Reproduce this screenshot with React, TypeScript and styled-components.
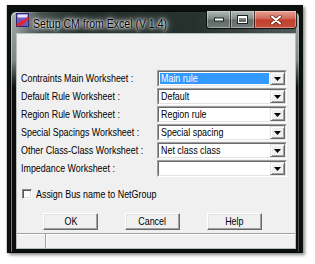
import React from 'react';
import styled, { createGlobalStyle } from 'styled-components';

const UI_FONT = "'Liberation Sans', Arial, sans-serif";

const GlobalStyle = createGlobalStyle`
  html, body {
    margin: 0;
    padding: 0;
    background: #ffffff;
  }
  body {
    width: 315px;
    height: 264px;
    overflow: hidden;
    font-family: ${UI_FONT};
  }
`;

/* the screenshot's text is horizontally condensed (Arial Narrow-like) */
const Narrow = styled.span<{ $origin?: string }>`
  display: inline-block;
  white-space: nowrap;
  transform: scaleX(0.81);
  transform-origin: ${(p) => p.$origin ?? 'left'} center;
`;

const Desktop = styled.div`
  box-sizing: border-box;
  margin: 5px 0 0 7px;
  width: 296px;
  height: 248px;
  padding: 6px 0 0 3px;
  background: #0c1110;
  box-shadow: 2px 2px 3px rgba(0, 0, 0, 0.45), -1px 0 1px rgba(0, 0, 0, 0.15);
`;

const Window = styled.div`
  box-sizing: border-box;
  width: 290px;
  height: 242px;
  display: flex;
  flex-direction: column;
  padding: 0 3px 3px 5px;
  border: 1px solid #070909;
  border-radius: 6px 6px 0 0;
  background:
    linear-gradient(180deg, rgba(8, 10, 10, 0) 0px, rgba(8, 10, 10, 0) 48px, rgba(8, 10, 10, 0.96) 76px),
    linear-gradient(180deg, #a3abaa 0px, #8c9593 30px, #6f7977 70px);
  box-shadow: inset 1px 1px 0 rgba(255, 255, 255, 0.45), inset -1px 0 0 rgba(255, 255, 255, 0.25);
`;

const TitleBar = styled.div`
  height: 21px;
  display: flex;
  align-items: flex-start;
  flex-shrink: 0;
  background: linear-gradient(90deg, rgba(30, 40, 37, 0) 0px, rgba(28, 38, 35, 0.7) 24px, rgba(22, 33, 29, 0.92) 60px, rgba(26, 36, 33, 0.9) 180px, rgba(50, 60, 58, 0.7) 100%);
`;

const AppIcon = styled.svg`
  margin-top: 1px;
  flex-shrink: 0;
`;

const Title = styled.div`
  margin: 4px 0 0 3px;
  width: 140px;
  font-size: 13px;
  line-height: 15px;
  color: #000;
  white-space: nowrap;
  text-shadow:
    0 0 2px #fff,
    0 0 4px rgba(255, 255, 255, 0.95),
    0 0 7px rgba(255, 255, 255, 0.85),
    0 0 11px rgba(255, 255, 255, 0.65);
`;

const CaptionGroup = styled.div`
  margin: -1px -1px 0 auto;
  display: flex;
  height: 17px;
  border: 1px solid rgba(0, 0, 0, 0.75);
  border-top: none;
  border-radius: 0 0 4px 4px;
  overflow: hidden;
`;

const CaptionButton = styled.div<{ $w: number; $close?: boolean }>`
  box-sizing: border-box;
  width: ${(p) => p.$w}px;
  height: 100%;
  display: flex;
  align-items: center;
  justify-content: center;
  background: ${(p) =>
    p.$close
      ? 'linear-gradient(180deg, #e8a093 0%, #d2705f 40%, #c0402c 55%, #c8503a 100%)'
      : 'linear-gradient(180deg, rgba(220,228,226,0.75) 0%, rgba(160,170,168,0.7) 45%, rgba(110,122,120,0.75) 55%, rgba(140,150,148,0.7) 100%)'};
  box-shadow: inset 0 0 0 1px rgba(255, 255, 255, 0.35);
  & + & {
    border-left: 1px solid rgba(0, 0, 0, 0.6);
  }
`;

const Client = styled.div`
  flex: 1;
  display: flex;
  flex-direction: column;
  background: #f0f0f0;
  border: 1px solid #b8c0be;
  font-size: 11px;
  color: #000;
`;

const FormGrid = styled.div`
  margin: 36px 0 0 4px;
  display: grid;
  grid-template-columns: 136px 130px;
  grid-auto-rows: 17px;
  row-gap: 1px;
  align-items: center;
`;

const Label = styled.div`
  line-height: 13px;
  white-space: nowrap;
`;

const Combo = styled.div`
  box-sizing: border-box;
  height: 17px;
  border: 1px solid;
  border-color: #a0a0a0 #ffffff #ffffff #a0a0a0;
  background: #fff;
`;

const ComboInner = styled.div`
  box-sizing: border-box;
  height: 100%;
  display: flex;
  border: 1px solid;
  border-color: #696969 #e3e3e3 #e3e3e3 #696969;
`;

const ComboValue = styled.div<{ $selected?: boolean }>`
  flex: 1;
  margin: 1px;
  padding-left: 1px;
  line-height: 11px;
  white-space: nowrap;
  overflow: hidden;
  background: ${(p) => (p.$selected ? '#3399ff' : 'transparent')};
  color: ${(p) => (p.$selected ? '#ffffff' : '#000000')};
`;

const ArrowButton = styled.div`
  box-sizing: border-box;
  width: 15px;
  display: flex;
  align-items: center;
  justify-content: center;
  background: #f0f0f0;
  border: 1px solid;
  border-color: #e3e3e3 #696969 #696969 #e3e3e3;
  box-shadow: inset 1px 1px 0 #ffffff, inset -1px -1px 0 #a0a0a0;
`;

const CheckRow = styled.label`
  margin: 12px 0 0 5px;
  display: flex;
  align-items: center;
  gap: 4px;
  height: 10px;
  line-height: 13px;
  white-space: nowrap;
`;

const CheckBox = styled.span`
  box-sizing: border-box;
  flex-shrink: 0;
  width: 10px;
  height: 10px;
  border: 1px solid;
  border-color: #8a8a8a #ffffff #ffffff #8a8a8a;
  background: #fff;
  box-shadow: inset 1px 1px 0 #5a5a5a, inset -1px -1px 0 #dcdcdc;
`;

const ButtonRow = styled.div`
  margin: 14px 0 0 26px;
  display: flex;
  gap: 27px;
`;

const PushButton = styled.button`
  box-sizing: border-box;
  width: 55px;
  height: 17px;
  padding: 0;
  background: #f0f0f0;
  border: 1px solid;
  border-color: #ffffff #696969 #696969 #ffffff;
  box-shadow: inset -1px -1px 0 #a0a0a0, inset 1px 1px 0 #e3e3e3;
  font-family: ${UI_FONT};
  font-size: 11px;
  line-height: 13px;
  color: #000;
`;

const StatusBar = styled.div`
  margin-top: auto;
  height: 14px;
  display: flex;
  border-top: 1px solid #a0a0a0;
  box-shadow: inset 0 1px 0 #ffffff;
`;

const StatusPanel = styled.div<{ $w?: number }>`
  box-sizing: border-box;
  ${(p) => (p.$w ? `width: ${p.$w}px;` : 'flex: 1;')}
  border-right: 1px solid #a0a0a0;
  box-shadow: 1px 0 0 #ffffff;
  margin-right: 1px;
  &:last-child {
    border-right: none;
    box-shadow: none;
  }
`;

const rows: { label: string; value: string; selected?: boolean }[] = [
  { label: 'Contraints Main Worksheet :', value: 'Main rule', selected: true },
  { label: 'Default Rule Worksheet :', value: 'Default' },
  { label: 'Region Rule Worksheet :', value: 'Region rule' },
  { label: 'Special Spacings Worksheet :', value: 'Special spacing' },
  { label: 'Other Class-Class Worksheet :', value: 'Net class class' },
  { label: 'Impedance Worksheet :', value: '' },
];

const DownArrow = () => (
  <svg width="7" height="4" viewBox="0 0 7 4">
    <path d="M0 0 H7 L3.5 4 Z" fill="#000" />
  </svg>
);

export default function App() {
  return (
    <>
      <GlobalStyle />
      <Desktop>
        <Window>
          <TitleBar>
            <AppIcon width="14" height="15" viewBox="0 0 14 15">
              <rect x="0.5" y="0.5" width="12" height="13" fill="#6a5cc0" stroke="#2c2570" />
              <rect x="1.5" y="1.5" width="10" height="3" fill="#e8e4ff" />
              <path d="M1 13 L6 8.5 L5 11.5 L12.5 4.5" stroke="#e5232a" strokeWidth="2.4" fill="none" strokeLinejoin="round" />
            </AppIcon>
            <Title>
              <Narrow>Setup CM from Excel (V 1.4)</Narrow>
            </Title>
            <CaptionGroup>
              <CaptionButton $w={23}>
                <svg width="10" height="5" viewBox="0 0 10 5">
                  <rect x="0.5" y="1" width="9" height="3" fill="#fff" stroke="#1c2422" strokeWidth="1" />
                </svg>
              </CaptionButton>
              <CaptionButton $w={24}>
                <svg width="11" height="9" viewBox="0 0 11 9">
                  <rect x="1" y="1" width="9" height="7" fill="none" stroke="#1c2422" strokeWidth="2" />
                  <rect x="1.5" y="1.5" width="8" height="6" fill="none" stroke="#fff" strokeWidth="1" />
                  <rect x="1.5" y="1.5" width="8" height="1.5" fill="#fff" />
                </svg>
              </CaptionButton>
              <CaptionButton $w={42} $close>
                <svg width="12" height="10" viewBox="0 0 12 10">
                  <path d="M2 1.5 L10 8.5 M10 1.5 L2 8.5" stroke="#5a1a10" strokeWidth="3.6" strokeLinecap="round" />
                  <path d="M2 1.5 L10 8.5 M10 1.5 L2 8.5" stroke="#fff" strokeWidth="2.2" strokeLinecap="round" />
                </svg>
              </CaptionButton>
            </CaptionGroup>
          </TitleBar>
          <Client>
            <FormGrid>
              {rows.map((r) => (
                <React.Fragment key={r.label}>
                  <Label>
                    <Narrow>{r.label}</Narrow>
                  </Label>
                  <Combo>
                    <ComboInner>
                      <ComboValue $selected={r.selected}>
                        <Narrow>{r.value}</Narrow>
                      </ComboValue>
                      <ArrowButton>
                        <DownArrow />
                      </ArrowButton>
                    </ComboInner>
                  </Combo>
                </React.Fragment>
              ))}
            </FormGrid>
            <CheckRow>
              <CheckBox />
              <Narrow>Assign Bus name to NetGroup</Narrow>
            </CheckRow>
            <ButtonRow>
              <PushButton>
                <Narrow $origin="center">OK</Narrow>
              </PushButton>
              <PushButton>
                <Narrow $origin="center">Cancel</Narrow>
              </PushButton>
              <PushButton>
                <Narrow $origin="center">Help</Narrow>
              </PushButton>
            </ButtonRow>
            <StatusBar>
              <StatusPanel $w={29} />
              <StatusPanel />
            </StatusBar>
          </Client>
        </Window>
      </Desktop>
    </>
  );
}
